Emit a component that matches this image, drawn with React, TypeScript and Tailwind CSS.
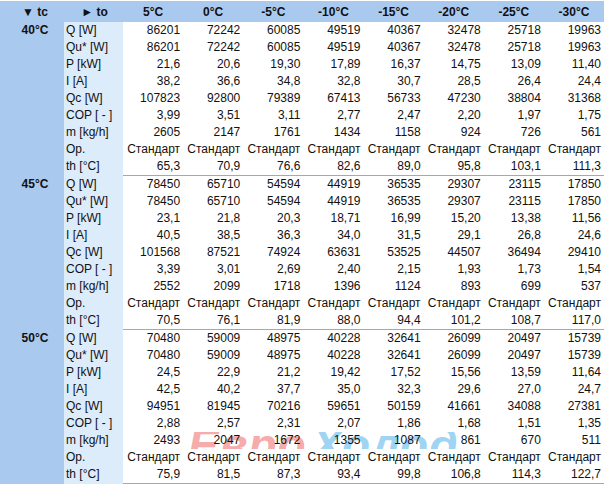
import React from "react";

type Block = { tc: string; rows: string[][] };

const labels = ["Q [W]", "Qu* [W]", "P [kW]", "I [A]", "Qc [W]", "COP [ - ]", "m [kg/h]", "Op.", "th [°C]"];
const heads = ["5°C", "0°C", "-5°C", "-10°C", "-15°C", "-20°C", "-25°C", "-30°C"];
const op = Array(8).fill("Стандарт");

const blocks: Block[] = [
  {
    tc: "40°C",
    rows: [
      ["86201", "72242", "60085", "49519", "40367", "32478", "25718", "19963"],
      ["86201", "72242", "60085", "49519", "40367", "32478", "25718", "19963"],
      ["21,6", "20,6", "19,30", "17,89", "16,37", "14,75", "13,09", "11,40"],
      ["38,2", "36,6", "34,8", "32,8", "30,7", "28,5", "26,4", "24,4"],
      ["107823", "92800", "79389", "67413", "56733", "47230", "38804", "31368"],
      ["3,99", "3,51", "3,11", "2,77", "2,47", "2,20", "1,97", "1,75"],
      ["2605", "2147", "1761", "1434", "1158", "924", "726", "561"],
      op,
      ["65,3", "70,9", "76,6", "82,6", "89,0", "95,8", "103,1", "111,3"],
    ],
  },
  {
    tc: "45°C",
    rows: [
      ["78450", "65710", "54594", "44919", "36535", "29307", "23115", "17850"],
      ["78450", "65710", "54594", "44919", "36535", "29307", "23115", "17850"],
      ["23,1", "21,8", "20,3", "18,71", "16,99", "15,20", "13,38", "11,56"],
      ["40,5", "38,5", "36,3", "34,0", "31,5", "29,1", "26,8", "24,6"],
      ["101568", "87521", "74924", "63631", "53525", "44507", "36494", "29410"],
      ["3,39", "3,01", "2,69", "2,40", "2,15", "1,93", "1,73", "1,54"],
      ["2552", "2099", "1718", "1396", "1124", "893", "699", "537"],
      op,
      ["70,5", "76,1", "81,9", "88,0", "94,4", "101,2", "108,7", "117,0"],
    ],
  },
  {
    tc: "50°C",
    rows: [
      ["70480", "59009", "48975", "40228", "32641", "26099", "20497", "15739"],
      ["70480", "59009", "48975", "40228", "32641", "26099", "20497", "15739"],
      ["24,5", "22,9", "21,2", "19,42", "17,52", "15,56", "13,59", "11,64"],
      ["42,5", "40,2", "37,7", "35,0", "32,3", "29,6", "27,0", "24,7"],
      ["94951", "81945", "70216", "59651", "50159", "41661", "34088", "27381"],
      ["2,88", "2,57", "2,31", "2,07", "1,86", "1,68", "1,51", "1,35"],
      ["2493", "2047", "1672", "1355", "1087", "861", "670", "511"],
      op,
      ["75,9", "81,5", "87,3", "93,4", "99,8", "106,8", "114,3", "122,7"],
    ],
  },
];

export default function App() {
  return (
    <div
      className="relative w-[609px] h-[490px] bg-white text-[12px] text-[#111]"
      style={{ fontFamily: '"Liberation Sans", Arial, sans-serif' }}
    >
      {/* watermark, visible only in one row */}
      <div className="absolute left-0 top-[432px] h-[17px] w-[604px] overflow-hidden pointer-events-none">
        <div className="absolute left-[188px] top-[-10px] text-[46px] leading-[46px] font-bold italic tracking-[1px] text-[#f6acac] whitespace-nowrap">
          Евро
        </div>
        <div className="absolute left-[312px] top-[-10px] text-[46px] leading-[46px] font-bold italic tracking-[1px] text-[#9fd4f3] whitespace-nowrap">
          Холод
        </div>
      </div>

      <div className="relative w-[604px] pt-[1px]">
        <div className="flex h-[21px] items-center bg-[#a9c9ef] font-bold">
          <div className="w-[64px] text-center pl-[6px]">▼ tc</div>
          <div className="w-[59px] text-center pl-[2px]">► to</div>
          <div className="flex flex-1">
            {heads.map((h) => (
              <div key={h} className="flex-1 text-center">
                {h}
              </div>
            ))}
          </div>
        </div>

        {blocks.map((b, bi) => (
          <div key={b.tc} className="flex">
            <div
              className={
                "w-[64px] bg-[#a9c9ef] font-bold text-center pl-[6px] leading-[17px] " +
                (bi > 0 ? "pt-[1px]" : "")
              }
            >
              {b.tc}
            </div>
            <div className={"w-[59px] bg-[#dcecfb] flex flex-col " + (bi > 0 ? "pt-[1px]" : "")}>
              {labels.map((l) => (
                <div key={l} className="h-[17px] leading-[17px] pl-[2px] whitespace-nowrap">
                  {l}
                </div>
              ))}
            </div>
            <div
              className={
                "flex-1 flex flex-col " +
                (bi > 0 ? "border-t border-[#a8a8a8] " : "") +
                (bi === 2 ? "border-b border-[#a8a8a8]" : "")
              }
            >
              {b.rows.map((r, ri) => (
                <div key={ri} className="flex h-[17px] leading-[17px]">
                  {r.map((v, ci) => (
                    <div key={ci} className="flex-1 text-right pr-[3px] whitespace-nowrap">
                      {v}
                    </div>
                  ))}
                </div>
              ))}
            </div>
          </div>
        ))}
      </div>
    </div>
  );
}
